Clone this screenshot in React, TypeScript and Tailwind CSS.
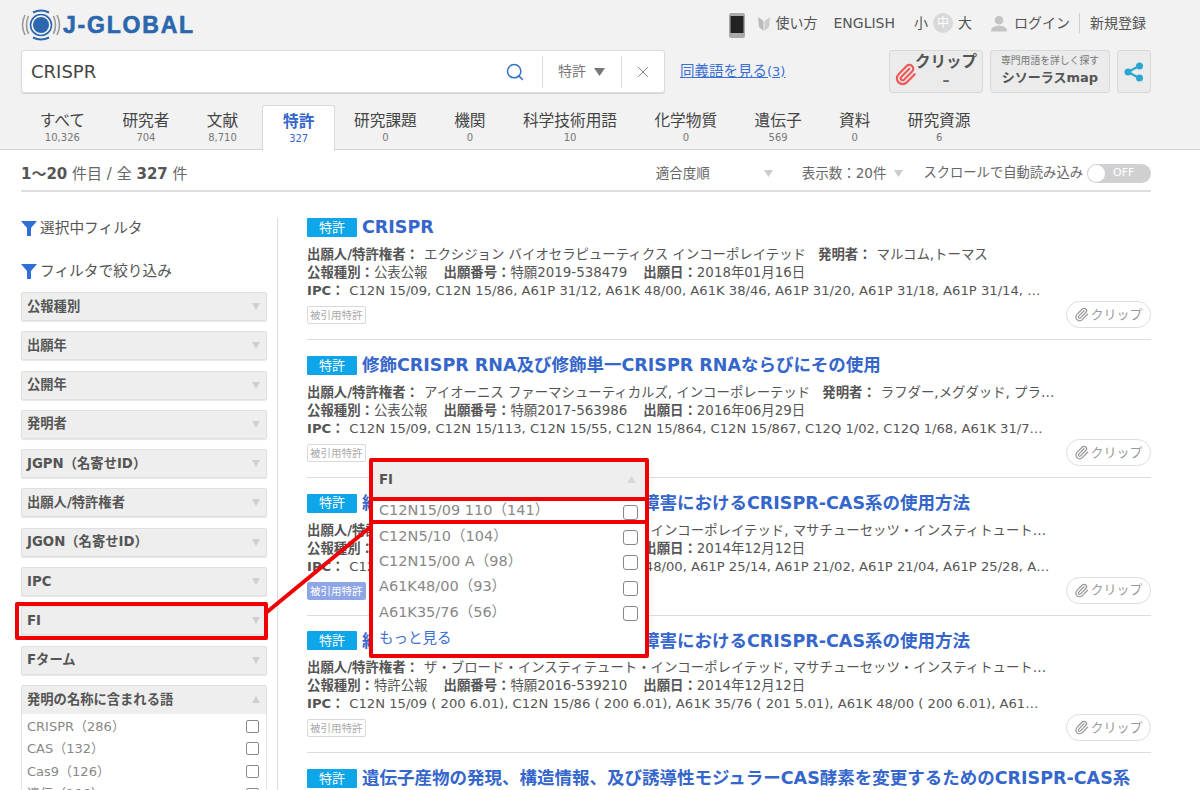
import { Paperclip, Search, X } from "lucide-react";

const FONT = "[font-family:'DejaVu_Sans','Noto_Sans_CJK_JP',sans-serif]";

const TABS = [
  { label: "すべて", count: "10,326" },
  { label: "研究者", count: "704" },
  { label: "文献", count: "8,710" },
  { label: "特許", count: "327", active: true },
  { label: "研究課題", count: "0" },
  { label: "機関", count: "0" },
  { label: "科学技術用語", count: "10" },
  { label: "化学物質", count: "0" },
  { label: "遺伝子", count: "569" },
  { label: "資料", count: "0" },
  { label: "研究資源", count: "6" },
];

const FILTERS = ["公報種別", "出願年", "公開年", "発明者", "JGPN（名寄せID）", "出願人/特許権者", "JGON（名寄せID）", "IPC", "FI", "Fターム"];

const RESULTS = [
  {
    title: "CRISPR",
    people: (
      <>
        <b className="mr-[5px]">出願人/特許権者：</b>エクシジョン バイオセラピューティクス インコーポレイテッド<b className="ml-3 mr-[5px]">発明者：</b>マルコム,トーマス
      </>
    ),
    kind: "公表公報",
    num: "特願2019-538479",
    date: "2018年01月16日",
    ipc: "C12N 15/09, C12N 15/86, A61P 31/12, A61K 48/00, A61K 38/46, A61P 31/20, A61P 31/18, A61P 31/14, …",
  },
  {
    title: "修飾CRISPR RNA及び修飾単一CRISPR RNAならびにその使用",
    people: (
      <>
        <b className="mr-[5px]">出願人/特許権者：</b>アイオーニス ファーマシューティカルズ, インコーポレーテッド<b className="ml-3 mr-[5px]">発明者：</b>ラフダー,メグダッド, プラ…
      </>
    ),
    kind: "公表公報",
    num: "特願2017-563986",
    date: "2016年06月29日",
    ipc: "C12N 15/09, C12N 15/113, C12N 15/55, C12N 15/864, C12N 15/867, C12Q 1/02, C12Q 1/68, A61K 31/7…",
  },
  {
    title: "組成物、ならびに神経の疾患および障害におけるCRISPR-CAS系の使用方法",
    people: (
      <>
        <b className="mr-[5px]">出願人/特許権者：</b>ザ・ブロード・インスティテュート・インコーポレイテッド, マサチューセッツ・インスティトュート…
      </>
    ),
    kind: "公表公報",
    num: "特願2016-539210",
    date: "2014年12月12日",
    ipc: "C12N 15/09, C12N 15/86, A61K 35/76, A61K 48/00, A61P 25/14, A61P 21/02, A61P 21/04, A61P 25/28, A…",
    cited: true,
  },
  {
    title: "組成物、ならびに神経の疾患および障害におけるCRISPR-CAS系の使用方法",
    people: (
      <>
        <b className="mr-[5px]">出願人/特許権者：</b>ザ・ブロード・インスティテュート・インコーポレイテッド, マサチューセッツ・インスティトュート…
      </>
    ),
    kind: "特許公報",
    num: "特願2016-539210",
    date: "2014年12月12日",
    ipc: "C12N 15/09 ( 200 6.01), C12N 15/86 ( 200 6.01), A61K 35/76 ( 201 5.01), A61K 48/00 ( 200 6.01), A61…",
  },
];

function Tri({ up, className = "" }: { up?: boolean; className?: string }) {
  return (
    <svg viewBox="0 0 11 8" preserveAspectRatio="none" className={className}>
      <polygon points={up ? "5.5,0 11,8 0,8" : "0,0 11,0 5.5,8"} fill="currentColor" />
    </svg>
  );
}

function Funnel() {
  return (
    <svg width="16" height="15" viewBox="0 0 16 15" className="shrink-0">
      <polygon points="0,0 16,0 10,7 10,15 6,15 6,7" fill="#2f6fd8" />
    </svg>
  );
}

function Logo() {
  return (
    <div className="flex items-center">
      <svg width="40" height="32" viewBox="0 0 40 32" fill="none">
        <path d="M4 6 Q-1 16 4 26" stroke="#999" strokeWidth="1.6" />
        <path d="M36 6 Q41 16 36 26" stroke="#999" strokeWidth="1.6" />
        <path d="M7.500 7 Q3.500 16 7.500 25" stroke="#999" strokeWidth="1.6" />
        <path d="M32.500 7 Q36.500 16 32.500 25" stroke="#999" strokeWidth="1.6" />
        <path d="M12 3.500 Q20 -0.500 28 3.500" stroke="#2a67ae" strokeWidth="2" />
        <path d="M12 28.500 Q20 32.500 28 28.500" stroke="#2a67ae" strokeWidth="2" />
        <circle cx="20" cy="16" r="10.500" stroke="#2a67ae" strokeWidth="1.600" />
        <circle cx="20" cy="16" r="8" fill="#2a67ae" />
      </svg>
      <span className="ml-[2px] font-['Liberation_Sans'] text-[23px] leading-none font-bold tracking-[1.800px] text-[#2a67ae] [-webkit-text-stroke:0.6px_#2a67ae]">J-GLOBAL</span>
    </div>
  );
}

function Header() {
  return (
    <header className="h-[150px] border-b border-[#d4d4d4] bg-[#f2f2f2] px-[21px] pt-[9px]">
      <div className="flex h-[32px] w-[1130px] items-center justify-between">
        <Logo />
        <div className="mb-[4px] flex items-center text-[14px] text-[#555]">
          <svg width="16" height="25" viewBox="0 0 16 25" className="mt-[4px]">
            <rect width="16" height="25" rx="2" fill="#aaa" />
            <rect x="1.500" y="3" width="13" height="17" fill="#222" />
          </svg>
          <svg width="12" height="15" viewBox="0 0 12 15" className="ml-[13px]">
            <path d="M0 1 L5.500 5 V15 L1 11 Z" fill="#bbb" />
            <path d="M12 1 L6.500 5 V15 L11 11 Z" fill="#ccc" />
          </svg>
          <span className="ml-[5px]">使い方</span>
          <span className="ml-[16px]">ENGLISH</span>
          <span className="ml-[19px]">小</span>
          <span className="mx-[5px] flex h-[20px] w-[20px] items-center justify-center rounded-full bg-[#d9d9d9] text-[12px] text-white">中</span>
          <span>大</span>
          <svg width="16" height="17" viewBox="0 0 17 17" className="ml-[19px]">
            <circle cx="8.500" cy="5" r="4.500" fill="#c4c4c4" />
            <path d="M0 17 C0 12 5 11 8.500 11 C12 11 17 12 17 17 Z" fill="#c4c4c4" />
          </svg>
          <span className="ml-[7px]">ログイン</span>
          <span className="ml-[9px] h-[20px] border-l border-[#cfcfcf]" />
          <span className="ml-[10px] mr-[5px]">新規登録</span>
        </div>
      </div>

      <div className="mt-[9px] flex h-[43px] w-[1130px] items-center">
        <div className="flex h-full w-[644px] items-center rounded-[3px] border border-[#dcdcdc] bg-white pl-[9px] shadow-[0_1px_1px_rgba(0,0,0,0.12)]">
          <span className="flex-1 text-[18px] text-[#444]">CRISPR</span>
          <Search size={20} strokeWidth={1.800} className="mr-[17px] text-[#2f72c4]" />
          <span className="h-[32px] border-l border-[#ddd]" />
          <span className="ml-[15px] text-[14px] text-[#777]">特許</span>
          <Tri className="ml-[8px] h-[8px] w-[11px] text-[#777]" />
          <span className="ml-[16px] h-[32px] border-l border-[#ddd]" />
          <X size={18} strokeWidth={1.200} className="mx-[12px] text-[#777]" />
        </div>
        <a className="ml-[15px] text-[14.500px] text-[#3b6fd4] underline">同義語を見る<span className="text-[13px]">(3)</span></a>
        <div className="ml-auto flex h-full items-stretch">
          <div className="relative flex w-[94px] flex-col items-center rounded-[3px] border border-[#d9d9d9] bg-[#ebebeb] pl-[20px]">
            <Paperclip size={23} strokeWidth={2.300} className="absolute left-[4px] top-[12px] text-[#ee5a5a]" />
            <span className="mt-[1px] text-[15.500px] leading-[20px] font-bold text-[#555]">クリップ</span>
            <span className="text-[14px] font-bold leading-[16px] text-[#666]">–</span>
          </div>
          <div className="ml-[7px] flex w-[120px] flex-col items-center rounded-[3px] border border-[#d9d9d9] bg-[#ebebeb]">
            <span className="mt-[3px] text-[9.800px] leading-[14px] text-[#777]">専門用語を詳しく探す</span>
            <span className="text-[13px] leading-[20px] font-bold text-[#555]">シソーラスmap</span>
          </div>
          <div className="ml-[7px] flex w-[34px] items-center justify-center rounded-[3px] border border-[#d9d9d9] bg-[#ebebeb]">
            <svg width="20" height="20" viewBox="0 0 20 20">
              <path d="M4 10 L15 4 M4 10 L15 16" stroke="#2ba6cf" strokeWidth="2" />
              <circle cx="4" cy="10" r="3.500" fill="#2ba6cf" />
              <circle cx="15.500" cy="4" r="3.500" fill="#2ba6cf" />
              <circle cx="15.500" cy="16" r="3.500" fill="#2ba6cf" />
            </svg>
          </div>
        </div>
      </div>

      <nav className="mt-[12px] flex h-[45px]">
        {TABS.map((t) =>
          t.active ? (
            <div key={t.label} className="relative ml-[5.100px] flex h-[46px] flex-col items-center rounded-t-[3px] border border-b-0 border-[#d9d9d9] bg-white px-[20px] pt-[5px]">
              <span className="text-[15.700px] leading-[22px] font-bold text-[#3566cc]">{t.label}</span>
              <span className="text-[10px] leading-[12px] text-[#3566cc]">{t.count}</span>
            </div>
          ) : (
            <div key={t.label} className="flex flex-col items-center px-[18.700px] pt-[5px]">
              <span className="text-[15.700px] leading-[22px] text-[#444]">{t.label}</span>
              <span className="text-[10px] leading-[12px] text-[#777]">{t.count}</span>
            </div>
          ),
        )}
      </nav>
    </header>
  );
}

function ResultBar() {
  return (
    <div className="mx-[21px] flex h-[42px] w-[1130px] items-center border-b-2 border-[#dedede] pt-[6px] text-[#666]">
      <span className="mt-[3px] text-[15px]">
        <b className="text-[#555]">1〜20</b> 件目 / 全 <b className="text-[#555]">327</b> 件
      </span>
      <span className="ml-auto text-[13.500px]">適合度順</span>
      <Tri className="ml-[54px] h-[7px] w-[9px] text-[#ccc]" />
      <span className="ml-[29px] text-[13.500px]">表示数：20件</span>
      <Tri className="ml-[8px] h-[7px] w-[9px] text-[#ccc]" />
      <span className="ml-[20px] text-[13.300px]">スクロールで自動読み込み</span>
      <span className="ml-[4px] flex h-[19px] w-[64px] items-center rounded-full bg-[#d0d0d0] pl-[1px]">
        <span className="h-[17px] w-[17px] rounded-full bg-white" />
        <span className="ml-[8px] text-[11px] text-white">OFF</span>
      </span>
    </div>
  );
}

function Sidebar() {
  return (
    <aside className="w-[257px] shrink-0 border-r border-[#dcdcdc] pr-[10px]">
      <div className="flex items-center gap-[3px] text-[14.700px] leading-[20px] text-[#555]">
        <Funnel />
        選択中フィルタ
      </div>
      <div className="mt-[23px] flex items-center gap-[3px] text-[14.700px] leading-[20px] text-[#555]">
        <Funnel />
        フィルタで絞り込み
      </div>
      <div className="mt-[11px] flex flex-col gap-[10.300px]">
        {FILTERS.map((f) => (
          <div key={f} className="flex h-[29px] items-center justify-between rounded-[2px] border border-[#e0e0e0] bg-[#eeeeee] pl-[5px] pr-[6px] shadow-[0_1px_1px_rgba(0,0,0,0.1)]">
            <b className="text-[13.300px] text-[#555]">{f}</b>
            <Tri className="h-[7px] w-[8px] text-[#d0d0d0]" />
          </div>
        ))}
        <div className="rounded-[2px] border border-[#e0e0e0]">
          <div className="flex h-[28px] items-center justify-between bg-[#eeeeee] pl-[5px] pr-[6px]">
            <b className="text-[13.300px] text-[#555]">発明の名称に含まれる語</b>
            <Tri up className="h-[7px] w-[8px] text-[#d0d0d0]" />
          </div>
          <ul className="px-[5px] pt-[1px] pb-[4px] text-[13px] text-[#888]">
            {["CRISPR（286）", "CAS（132）", "Cas9（126）", "遺伝（106）"].map((w) => (
              <li key={w} className="flex h-[22.600px] items-center justify-between">
                {w}
                <span className="mr-[2px] h-[13px] w-[13px] rounded-[2px] border border-[#888] bg-white" />
              </li>
            ))}
          </ul>
        </div>
      </div>
    </aside>
  );
}

function Result({ r }: { r: (typeof RESULTS)[number] }) {
  return (
    <article className="relative mb-[15.750px] h-[122px] border-b border-[#dcdcdc]">
      <div className="flex h-[19px] items-center">
        <span className="flex h-[19px] w-[50px] shrink-0 items-center justify-center rounded-[1px] bg-[#0ea5e9] text-[13px] text-white">特許</span>
        <h2 className="ml-[5px] text-[17.500px] font-bold whitespace-nowrap text-[#3566cc]">{r.title}</h2>
      </div>
      <div className="mt-[9px] w-[748px] text-[13.400px] leading-[18px] text-[#555]">
        <p className="truncate">{r.people}</p>
        <p className="truncate">
          <b>公報種別：</b>{r.kind}<b className="ml-4">出願番号：</b>{r.num}<b className="ml-4">出願日：</b>{r.date}
        </p>
        <p className="truncate text-[13.150px]">
          <b className="mr-[5px]">IPC：</b>{r.ipc}
        </p>
      </div>
      <span
        className={
          r.cited
            ? "mt-[6px] inline-block rounded-[2px] border border-[#8fa6e6] bg-[#8fa6e6] px-[2px] text-[10.500px] leading-[16px] text-white"
            : "mt-[6px] inline-block rounded-[2px] border border-[#d8d8d8] px-[2px] text-[10.500px] leading-[16px] text-[#aaa]"
        }
      >
        被引用特許
      </span>
      <div className="absolute right-0 top-[83px] flex h-[27px] w-[85px] items-center justify-center rounded-full border border-[#ddd] text-[13px] text-[#999]">
        <Paperclip size={15} className="mr-[1px]" />
        クリップ
      </div>
    </article>
  );
}

function FiPopup() {
  return (
    <>
      <div className="absolute left-[15px] top-[602px] h-[38px] w-[253px] rounded-[2px] border-[4px] border-[#f00000]" />
      <svg className="absolute left-0 top-0" width="1200" height="790">
        <line x1="267" y1="612" x2="374" y2="524" stroke="#f00000" strokeWidth="4" />
      </svg>
      <div className="absolute left-[369px] top-[458px] h-[200px] w-[280px] rounded-[2px] border-[4px] border-[#f00000] bg-white">
        <div className="flex h-[35px] items-center justify-between bg-[#eeeeee] pl-[6px] pr-[9px]">
          <b className="text-[13.300px] text-[#555]">FI</b>
          <Tri up className="h-[7px] w-[9px] text-[#d8d8d8]" />
        </div>
        <div className="text-[14.500px] text-[#888]">
          <div className="-mx-[4px] flex h-[27px] items-center justify-between border-[4px] border-[#f00000] pl-[6px] pr-[7px] leading-none">
            C12N15/09 110（141）
            <span className="mt-[3px] h-[15px] w-[15px] rounded-[3px] border border-[#888]" />
          </div>
          {["C12N5/10（104）", "C12N15/00 A（98）", "A61K48/00（93）", "A61K35/76（56）"].map((v) => (
            <div key={v} className="flex h-[25.300px] items-center justify-between pl-[6px] pr-[7px] first:mt-[1px]">
              {v}
              <span className="mt-[2px] h-[15px] w-[15px] rounded-[3px] border border-[#888]" />
            </div>
          ))}
          <div className="pl-[6px] pt-[3px] text-[#3b6fd4]">もっと見る</div>
        </div>
      </div>
    </>
  );
}

export default function App() {
  return (
    <div className={`relative h-[790px] w-[1200px] overflow-hidden bg-white ${FONT}`}>
      <Header />
      <ResultBar />
      <main className="mx-[21px] mt-[26px] flex w-[1130px]">
        <Sidebar />
        <section className="ml-[29px] min-w-0 flex-1">
          {RESULTS.map((r) => (
            <Result key={r.title + r.kind + r.ipc} r={r} />
          ))}
          <div className="flex h-[19px] items-center">
            <span className="flex h-[19px] w-[50px] shrink-0 items-center justify-center rounded-[1px] bg-[#0ea5e9] text-[13px] text-white">特許</span>
            <h2 className="ml-[5px] text-[17.500px] font-bold whitespace-nowrap text-[#3566cc]">遺伝子産物の発現、構造情報、及び誘導性モジュラーCAS酵素を変更するためのCRISPR-CAS系</h2>
          </div>
        </section>
      </main>
      <FiPopup />
    </div>
  );
}
